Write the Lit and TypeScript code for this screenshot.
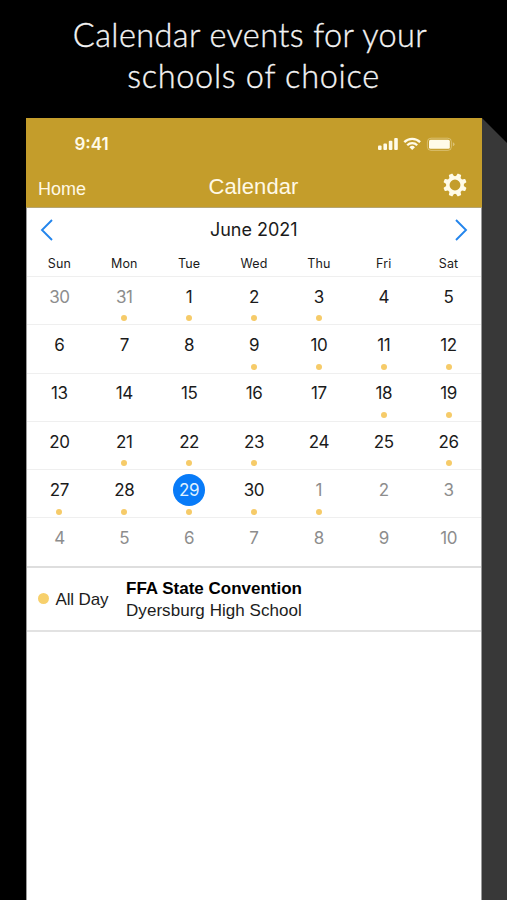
import { LitElement, html, css, svg } from "lit";
import { customElement, property } from "lit/decorators.js";

interface Day {
  n: number;
  out?: boolean;
  dot?: boolean;
  selected?: boolean;
}

const EVENT_DAYS = new Set([1, 2, 3, 9, 10, 11, 12, 18, 19, 21, 22, 23, 26, 27, 28, 29, 30]);
const WEEKDAYS = ["Sun", "Mon", "Tue", "Wed", "Thu", "Fri", "Sat"];

const DAYS: Day[] = [
  { n: 30, out: true },
  { n: 31, out: true, dot: true },
  ...Array.from({ length: 30 }, (_, i) => ({
    n: i + 1,
    dot: EVENT_DAYS.has(i + 1),
    selected: i + 1 === 29,
  })),
  ...Array.from({ length: 10 }, (_, i) => ({ n: i + 1, out: true, dot: i === 0 })),
];
const WEEKS = Array.from({ length: 6 }, (_, w) => DAYS.slice(w * 7, w * 7 + 7));

@customElement("status-bar")
class StatusBar extends LitElement {
  static styles = css`
    :host {
      display: flex;
      align-items: center;
      height: 52px;
      padding: 0 25px 0 47.5px;
      justify-content: space-between;
      color: #fffbe8;
    }
    .time {
      font: 600 17px/20px Inter, "Liberation Sans", sans-serif;
    }
    svg {
      display: block;
      width: 78px;
      height: 16px;
    }
  `;
  render() {
    return html`
      <span class="time">9:41</span>
      <svg viewBox="0 0 78 16" fill="#fffbe8">
        <rect x="0" y="9.6" width="3.6" height="4.4" rx="1" />
        <rect x="5.4" y="7.4" width="3.6" height="6.6" rx="1" />
        <rect x="10.8" y="4.8" width="3.6" height="9.2" rx="1" />
        <rect x="16.2" y="2" width="3.6" height="12" rx="1" />
        <g fill="none" stroke="#fffbe8" stroke-width="2.3">
          <path d="M26.3 6.1a11.2 11.2 0 0 1 15.8 0" />
          <path d="M29.2 9.2a7.1 7.1 0 0 1 10 0" />
        </g>
        <path d="M34.2 14l-2.8-2.8a4 4 0 0 1 5.6 0z" />
        <rect x="49.4" y="2.2" width="24" height="12.2" rx="3.6" fill="none" stroke="#fffbe8" stroke-opacity=".35" />
        <rect x="51" y="3.8" width="20.8" height="9" rx="1.5" />
        <path d="M74.9 6.3q1.6.6 1.6 2t-1.6 2z" opacity=".4" />
      </svg>
    `;
  }
}

@customElement("nav-bar")
class NavBar extends LitElement {
  static styles = css`
    :host {
      display: grid;
      grid-template-columns: 1fr auto 1fr;
      height: 37px;
      padding: 0 14px 0 11px;
      color: #fff9e6;
      font-family: "Liberation Sans", Arial, sans-serif;
      white-space: nowrap;
    }
    .back {
      font-size: 18px;
      line-height: 20px;
      padding-top: 9px;
    }
    .title {
      font-size: 22px;
      line-height: 26px;
      padding: 4px 0 0 2px;
      letter-spacing: 0.1px;
    }
    svg {
      display: block;
      justify-self: end;
      width: 24px;
      height: 24px;
      margin-top: 3px;
    }
  `;
  render() {
    const teeth = [22.5, 67.5, 112.5, 157.5, 202.5, 247.5, 292.5, 337.5];
    return html`
      <span class="back">Home</span>
      <span class="title">Calendar</span>
      <svg viewBox="-12 -12 24 24">
        ${teeth.map(
          (a) => svg`<path d="M-2.7 -7.5L-2 -11.1Q-1.9 -11.7 -1.3 -11.7H1.3Q1.9 -11.7 2 -11.1L2.7 -7.5Z" fill="#fffbe8" transform="rotate(${a})" />`
        )}
        <circle r="7.2" fill="none" stroke="#fffbe8" stroke-width="3.5" />
      </svg>
    `;
  }
}

@customElement("month-calendar")
class MonthCalendar extends LitElement {
  static styles = css`
    :host {
      display: block;
      font-family: Inter, "Liberation Sans", sans-serif;
      color: #1b1b1b;
    }
    .head {
      display: flex;
      align-items: center;
      justify-content: space-between;
      height: 44px;
      padding: 0 13px 0 12.5px;
      font-size: 18px;
    }
    .month {
      margin-top: -1px;
    }
    .head svg {
      width: 13px;
      height: 22px;
      fill: none;
      stroke: #2385ec;
      stroke-width: 1.9;
    }
    .grid {
      display: grid;
      grid-template-columns: repeat(7, 1fr);
      box-sizing: border-box;
    }
    .names {
      height: 24px;
      font-size: 12.5px;
      line-height: 23px;
      text-align: center;
      letter-spacing: 0.1px;
    }
    .week {
      height: 48.3px;
      border-top: 1px solid #efefef;
    }
    .day {
      display: flex;
      flex-direction: column;
      align-items: center;
      padding-top: 3.7px;
    }
    .num {
      width: 32px;
      height: 32px;
      border-radius: 50%;
      text-align: center;
      font-size: 17px;
      line-height: 32px;
      letter-spacing: -0.4px;
    }
    .out {
      color: #8d8d8d;
    }
    .selected {
      background: #087bf8;
      color: #dff0ff;
    }
    .dot {
      width: 6px;
      height: 6px;
      margin-top: 2.8px;
      border-radius: 50%;
      background: #f6cb69;
    }
  `;
  render() {
    return html`
      <div class="head">
        <svg viewBox="0 0 13 22"><path d="M12 1L2 11L12 21" /></svg>
        <span class="month">June 2021</span>
        <svg viewBox="0 0 13 22"><path d="M1 1L11 11L1 21" /></svg>
      </div>
      <div class="grid names">${WEEKDAYS.map((d) => html`<span>${d}</span>`)}</div>
      ${WEEKS.map(
        (week) => html`<div class="grid week">
          ${week.map(
            (d) => html`<div class="day">
              <span class="num ${d.out ? "out" : ""} ${d.selected ? "selected" : ""}">${d.n}</span>
              ${d.dot ? html`<i class="dot"></i>` : ""}
            </div>`
          )}
        </div>`
      )}
    `;
  }
}

@customElement("event-row")
class EventRow extends LitElement {
  @property() when = "";
  @property() name = "";
  @property() place = "";
  static styles = css`
    :host {
      display: flex;
      align-items: center;
      box-sizing: border-box;
      height: 66px;
      padding: 2px 0 0 10.5px;
      border-top: 2px solid #dedede;
      border-bottom: 2px solid #e2e2e2;
      font: 17px/22px "Liberation Sans", Arial, sans-serif;
      color: #1c1c1c;
      white-space: nowrap;
    }
    .dot {
      width: 11px;
      height: 11px;
      margin-top: -2px;
      border-radius: 50%;
      background: #f7d06c;
    }
    .when {
      width: 70.5px;
      margin-left: 7px;
      letter-spacing: -0.15px;
    }
    .name {
      font-weight: 700;
      color: #000;
    }
    .place {
      letter-spacing: 0.05px;
    }
  `;
  render() {
    return html`
      <i class="dot"></i>
      <span class="when">${this.when}</span>
      <div>
        <div class="name">${this.name}</div>
        <div class="place">${this.place}</div>
      </div>
    `;
  }
}

@customElement("app-root")
class AppRoot extends LitElement {
  static styles = css`
    :host {
      display: block;
      width: 507px;
      height: 900px;
      overflow: hidden;
      background: #000;
    }
    .headline {
      box-sizing: border-box;
      height: 118px;
      padding-top: 14px;
      text-align: center;
      color: #f4f4f4;
      font: 300 32.5px/41px Lato, "Open Sans", sans-serif;
      -webkit-text-stroke: 0.35px #f4f4f4;
      white-space: nowrap;
    }
    .line {
      display: block;
    }
    .first {
      margin-right: 7px;
      letter-spacing: 0.4px;
    }
    .second {
      letter-spacing: 0.7px;
    }
    .stage {
      display: flex;
      height: 782px;
      padding-left: 26px;
    }
    .phone {
      box-sizing: border-box;
      width: 456px;
      background: #fff;
      border: solid #9a9a9a;
      border-width: 0 1px;
    }
    .bar {
      height: 89px;
      margin: 0 -1px;
      padding: 0 1px;
      background: #c49d2b;
      border-bottom: 1px solid #b5a572;
    }
    .side {
      flex: 1;
      background: #383838;
      clip-path: polygon(0 0, 100% 25px, 100% 100%, 0 100%);
    }
  `;
  render() {
    return html`
      <div class="headline">
        <span class="line first">Calendar events for your</span>
        <span class="line second">schools of choice</span>
      </div>
      <div class="stage">
        <div class="phone">
          <div class="bar"><status-bar></status-bar><nav-bar></nav-bar></div>
          <month-calendar></month-calendar>
          <event-row when="All Day" name="FFA State Convention" place="Dyersburg High School"></event-row>
        </div>
        <div class="side"></div>
      </div>
    `;
  }
}
